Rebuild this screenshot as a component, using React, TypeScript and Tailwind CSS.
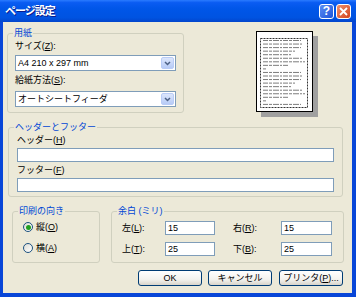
import type { ReactNode } from "react";

const lineWidths = [38, 40, 38, 32, 28, 40, 42, 25, 3];

const GroupBox = ({ title, className, children }: { title: string; className: string; children: ReactNode }) => (
  <fieldset className={"rounded-[3px] border border-[#D0D0BF] " + className}>
    <legend className="ml-[5px] px-[1px] text-[9px] leading-[10px] text-[#0046D5]">{title}</legend>
    {children}
  </fieldset>
);

const XPSelect = ({ value }: { value: string }) => (
  <div className="flex h-[16px] w-[161px] items-center border border-[#7F9DB9] bg-white pl-[2px]">
    <span className="flex-1 text-[9px] leading-[11px]">{value}</span>
    <div className="mr-[1px] flex h-[12px] w-[13px] items-center justify-center rounded-[2px] border border-[#B9CCF6] bg-[linear-gradient(to_bottom,#DCE6FC,#B7CBF6)]">
      <svg width="7" height="5" viewBox="0 0 7 5">
        <path d="M1 1 L3.5 3.5 L6 1" fill="none" stroke="#4D6185" strokeWidth="1.5" />
      </svg>
    </div>
  </div>
);

const XPInput = ({ value, className }: { value?: string; className: string }) => (
  <div className={"flex h-[14px] items-center border border-[#7F9DB9] bg-white pl-[2px] text-[9px] leading-[11px] " + className}>
    {value}
  </div>
);

const XPButton = ({ children, className }: { children: ReactNode; className: string }) => (
  <button className={"flex h-[16px] w-[64px] items-center justify-center rounded-[3px] border border-[#003C74] bg-[linear-gradient(to_bottom,#FFFFFF,#F3F2EE_60%,#D8D4CA)] text-[9px] leading-[11px] " + className}>
    {children}
  </button>
);

const Radio = ({ checked, label, hot }: { checked?: boolean; label: string; hot: string }) => (
  <div className="flex h-[14px] items-center pl-[10px]">
    <div className="flex h-[10px] w-[10px] items-center justify-center rounded-full border border-[#1C5180] bg-[linear-gradient(135deg,#DCDCD4,#FFFFFF)]">
      {checked && <div className="h-[5px] w-[5px] rounded-full bg-[#21A121]" />}
    </div>
    <span className="ml-[3px] text-[9px] leading-[11px]">
      {label}(<u>{hot}</u>)
    </span>
  </div>
);

const MarginRow = ({ l, lk, lv, r, rk, rv }: { l: string; lk: string; lv: string; r: string; rk: string; rv: string }) => (
  <div className="flex h-[14px] items-center pl-[10px]">
    <span className="w-[43px] text-[9px] leading-[11px]">
      {l}(<u>{lk}</u>):
    </span>
    <XPInput value={lv} className="w-[50px]" />
    <span className="ml-[18px] w-[48px] text-[9px] leading-[11px]">
      {r}(<u>{rk}</u>):
    </span>
    <XPInput value={rv} className="w-[51px]" />
  </div>
);

export default function App() {
  return (
    <div className="flex h-[297px] w-[356px] flex-col bg-[#0846D8] font-['Liberation_Sans','Noto_Sans_CJK_JP',sans-serif] text-black">
      <div className="flex h-[22px] items-center bg-[linear-gradient(to_bottom,#2A7BFF_0%,#0A5CF2_12%,#0056E8_40%,#0053E1_80%,#0245CC_100%)] pl-[5px] pr-[5px]">
        <span className="flex-1 text-[11px] font-bold leading-[14px] tracking-[-1px] text-white [text-shadow:1px_1px_#0A1C8C]">ページ設定</span>
        <div className="flex h-[15px] w-[15px] items-center justify-center rounded-[3px] border border-white bg-[linear-gradient(135deg,#5C8DF5,#1D55D8)] text-[12px] font-bold leading-[12px] text-white">?</div>
        <div className="ml-[2px] flex h-[15px] w-[15px] items-center justify-center rounded-[3px] border border-white bg-[linear-gradient(135deg,#F0906C,#D2441E)]">
          <svg width="9" height="9" viewBox="0 0 9 9">
            <path d="M1 1 L8 8 M8 1 L1 8" stroke="white" strokeWidth="1.8" />
          </svg>
        </div>
      </div>

      <div className="mb-[4px] ml-[3px] mr-[4px] flex flex-1 flex-col bg-[#ECE9D8]">
        <div className="flex items-start">
          <GroupBox title="用紙" className="ml-[4px] mt-[6px] w-[177px]">
            <div className="px-[7px] pb-[5px]">
              <div className="mt-[3px] text-[9px] leading-[11px]">
                サイズ(<u>Z</u>):
              </div>
              <div className="mt-[3px]">
                <XPSelect value="A4 210 x 297 mm" />
              </div>
              <div className="mt-[4px] text-[9px] leading-[11px]">
                給紙方法(<u>S</u>):
              </div>
              <div className="mt-[5px]">
                <XPSelect value="オートシートフィーダ" />
              </div>
            </div>
          </GroupBox>

          <div className="ml-[72px] mt-[9px] h-[81px] w-[57px] border border-black bg-white shadow-[5px_5px_0_#A0A0A0]">
            <svg width="55" height="79" viewBox="0 0 55 79">
              <rect x="3.5" y="6.5" width="47" height="69" fill="none" stroke="#333" strokeDasharray="2 1" />
              {Array.from({ length: 19 }, (_, i) => (
                <line
                  key={i}
                  x1="6"
                  x2={6 + lineWidths[i % 9]}
                  y1={8.5 + i * 3.55}
                  y2={8.5 + i * 3.55}
                  stroke="#7C7C7C"
                  strokeWidth="1"
                  strokeDasharray="5 1 3 1 6 1 2 1"
                />
              ))}
            </svg>
          </div>
        </div>

        <GroupBox title="ヘッダーとフッター" className="ml-[5px] mt-[9px] w-[335px]">
          <div className="pb-[4px] pl-[8px]">
            <div className="mt-[3px] text-[9px] leading-[11px]">
              ヘッダー(<u>H</u>)
            </div>
            <XPInput className="mt-[2px] w-[317px]" />
            <div className="mt-[3px] text-[9px] leading-[11px]">
              フッター(<u>F</u>)
            </div>
            <XPInput className="mt-[2px] w-[317px]" />
          </div>
        </GroupBox>

        <div className="mt-[9px] flex items-stretch">
          <GroupBox title="印刷の向き" className="ml-[9px] w-[88px]">
            <div className="mt-[4px] flex flex-col gap-[7px] pb-[7px]">
              <Radio checked label="縦" hot="O" />
              <Radio label="横" hot="A" />
            </div>
          </GroupBox>
          <GroupBox title="余白 (ミリ)" className="ml-[11px] w-[233px]">
            <div className="mt-[5px] flex flex-col gap-[7px] pb-[6px]">
              <MarginRow l="左" lk="L" lv="15" r="右" rk="R" rv="15" />
              <MarginRow l="上" lk="T" lv="25" r="下" rk="B" rv="25" />
            </div>
          </GroupBox>
        </div>

        <div className="mt-[7px] flex justify-end pr-[9px]">
          <XPButton className="">OK</XPButton>
          <XPButton className="ml-[6px]">キャンセル</XPButton>
          <XPButton className="ml-[7px]">
            プリンタ(<u>P</u>)...
          </XPButton>
        </div>
      </div>
    </div>
  );
}
